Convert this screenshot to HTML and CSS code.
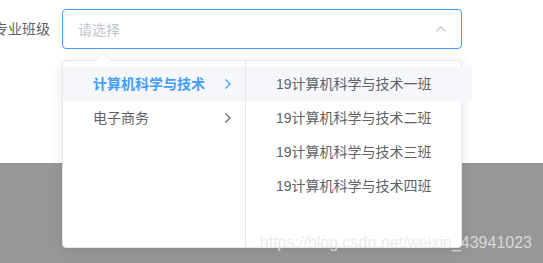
FILE: index.html
```html
<!DOCTYPE html>
<html lang="zh">
<head>
    <meta charset="UTF-8">
    <title>级联选择</title>
    <link rel="stylesheet" href="styles.css">
</head>
<body>
    <div class="page-top">
        <div class="form-item">
            <label class="form-label">专业班级</label>
            <div class="cascader">
                <div class="input is-focus">
                    <span class="placeholder">请选择</span>
                    <svg class="suffix" width="14" height="14" viewBox="0 0 14 14">
                        <path d="M2.5 9.2 L7 4.8 L11.5 9.2" fill="none" stroke="#c0c4cc" stroke-width="1.2"/>
                    </svg>
                </div>

                <div class="dropdown">
                    <div class="popper-arrow"></div>
                    <div class="menu menu-left">
                        <div class="node is-active">
                            <span class="node-label">计算机科学与技术</span>
                            <svg class="node-arrow" width="8" height="12" viewBox="0 0 8 12">
                                <path d="M1.5 1.5 L6 6 L1.5 10.5" fill="none" stroke="#409eff" stroke-width="1.2"/>
                            </svg>
                        </div>
                        <div class="node">
                            <span class="node-label">电子商务</span>
                            <svg class="node-arrow" width="8" height="12" viewBox="0 0 8 12">
                                <path d="M1.5 1.5 L6 6 L1.5 10.5" fill="none" stroke="#606266" stroke-width="1.2"/>
                            </svg>
                        </div>
                    </div>
                    <div class="menu menu-right">
                        <div class="node is-hover"><span class="node-label">19计算机科学与技术一班</span></div>
                        <div class="node"><span class="node-label">19计算机科学与技术二班</span></div>
                        <div class="node"><span class="node-label">19计算机科学与技术三班</span></div>
                        <div class="node"><span class="node-label">19计算机科学与技术四班</span></div>
                    </div>
                </div>
            </div>
        </div>
    </div>
    <div class="page-bottom"></div>
    <div class="watermark">https://blog.csdn.net/weixin_43941023</div>
</body>
</html>
```

FILE: styles.css
```css
body {
    margin: 0;
    font-family: "Liberation Sans", "Noto Sans CJK SC", sans-serif;
    font-size: 14px;
    color: #606266;
    background-color: #979797;
    height: 263px;
    overflow: hidden;
    position: relative;
}
.page-top {
    background-color: #fff;
    height: 163px;
    padding-top: 9px;
    box-sizing: border-box;
}
.form-item {
    display: flex;
    align-items: center;
    margin-left: -6px;
}
.form-label {
    width: 56px;
    padding-right: 12px;
    text-align: right;
    line-height: 40px;
}
.cascader {
    position: relative;
}
.input {
    width: 400px;
    height: 40px;
    box-sizing: border-box;
    border: 1px solid #dcdfe6;
    border-radius: 4px;
    padding: 0 15px;
    display: flex;
    align-items: center;
    justify-content: space-between;
}
.input.is-focus {
    border-color: #409eff;
}
.placeholder {
    color: #c0c4cc;
}
.suffix {
    margin-right: -2px;
}
.dropdown {
    position: absolute;
    top: 51px;
    left: 0;
    width: 400px;
    height: 188px;
    box-sizing: border-box;
    display: flex;
    background-color: #fff;
    border: 1px solid #e4e7ed;
    border-radius: 4px;
    box-shadow: 0 2px 12px rgba(0,0,0,0.1);
}
.popper-arrow {
    position: absolute;
    top: -7px;
    left: 35px;
    width: 10px;
    height: 10px;
    background-color: #fff;
    border-left: 1px solid #ebeef5;
    border-top: 1px solid #ebeef5;
    transform: rotate(45deg);
}
.menu {
    padding: 6px 0;
    box-sizing: border-box;
}
.menu-left {
    width: 183px;
    border-right: 1px solid #e4e7ed;
}
.menu-right {
    flex: 1;
}
.node {
    position: relative;
    height: 34px;
    line-height: 34px;
    padding: 0 30px 0 20px;
    display: flex;
    align-items: center;
}
.node-label {
    padding: 0 10px;
    white-space: nowrap;
}
.node.is-active {
    background-color: #f5f7fa;
    color: #409eff;
    font-weight: bold;
}
.node.is-hover {
    background-color: #f5f7fa;
}
.node-arrow {
    position: absolute;
    right: 13px;
    top: 11px;
}
.watermark {
    position: absolute;
    right: 11px;
    top: 233px;
    font-family: "Liberation Sans", sans-serif;
    font-size: 16px;
    color: rgba(230,230,230,0.83);
    line-height: 20px;
}
```
